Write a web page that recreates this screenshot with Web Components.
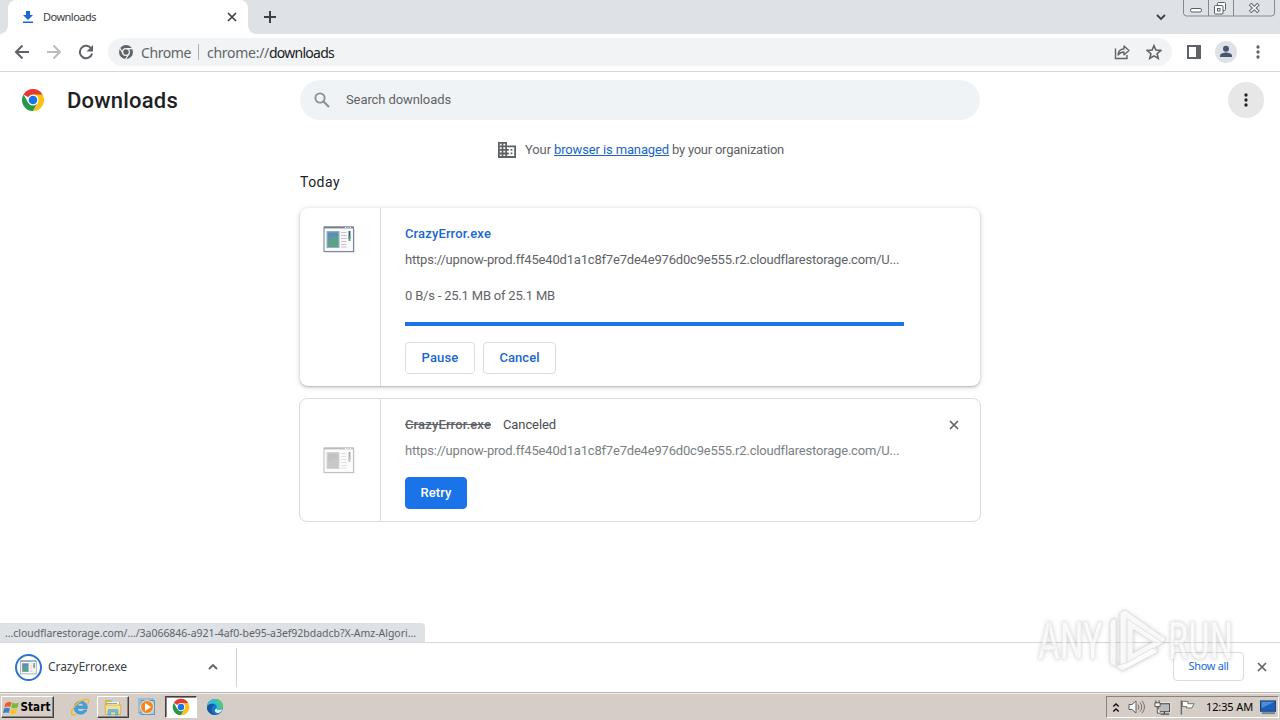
<!DOCTYPE html>
<html lang="en">
<head>
<meta charset="utf-8">
<title>Downloads</title>
<style>
html, body {
    margin: 0;
    height: 100%;
    overflow: hidden;
    background: #fff;
}
</style>
</head>
<body>
<desktop-screen></desktop-screen>

<script>
const define = (name, html, setup) => {
    const template = document.createElement('template');
    template.innerHTML = html;

    window.customElements.define(name, class extends HTMLElement {
        constructor() {
            super();
            this._shadowRoot = this.attachShadow({ mode: 'open' });
            this._shadowRoot.appendChild(template.content.cloneNode(true));
        }

        connectedCallback() {
            if (setup) setup(this, this._shadowRoot);
        }
    });
};

// Single line of text, tracked so that it fills the given width
define('fit-text', `
<style>
:host { display: inline-block; white-space: nowrap; flex: none; padding-bottom: var(--lift, 2px); }
</style>
<span><slot></slot></span>
`, (host, root) => {
    const span = root.querySelector('span');
    const count = host.textContent.length;
    span.style.letterSpacing = '0';
    const natural = span.getBoundingClientRect().width;
    if (natural) {
        span.style.letterSpacing = (host.getAttribute('w') - natural) / count + 'px';
    }
});

const icons = {
    download: ['0 0 12 14', '<path d="M4 1h4v4h3L6 10 1 5h3zM1 11.6h10V13H1z" fill="#1967d2"/>'],
    close: ['0 0 10 10', '<path d="M1 1l8 8M9 1L1 9" stroke="currentColor" stroke-width="1.7"/>'],
    plus: ['0 0 12 12', '<path d="M6 0v12M0 6h12" stroke="#3c4043" stroke-width="2"/>'],
    chevron: ['0 0 10 10', '<path d="M1 3l4 4 4-4" fill="none" stroke="currentColor" stroke-width="1.8"/>'],
    up: ['0 0 10 10', '<path d="M1 7l4-4 4 4" fill="none" stroke="currentColor" stroke-width="1.8"/>'],
    back: ['0 0 16 16', '<path d="M15 8H2M8.5 1.5L2 8l6.500 6.500" fill="none" stroke="#5f6368" stroke-width="2"/>'],
    forward: ['0 0 16 16', '<path d="M1 8h13M7.500 1.500L14 8l-6.500 6.500" fill="none" stroke="#babcbe" stroke-width="2"/>'],
    reload: ['0 0 16 16', '<path d="M13.300 4.700A6.200 6.200 0 1 0 14.100 9.500" fill="none" stroke="#5f6368" stroke-width="2"/><path d="M15 1v6.500H8.500z" fill="#5f6368"/>'],
    mono: ['0 0 16 16', '<circle cx="8" cy="8" r="7" fill="#5f6368"/><circle cx="8" cy="8" r="3.400" fill="#5f6368" stroke="#f1f3f4" stroke-width="1.300"/><path d="M8 4.600h6.500M5.100 9.700L1.700 4M10.900 9.700L7.600 15.200" stroke="#f1f3f4" stroke-width="1.200"/>'],
    chrome: ['0 0 24 24', '<path d="M12 12L2.470 6.500A11 11 0 0 1 21.530 6.500z" fill="#e33b2e"/><path d="M7.200 14.700L2.470 6.500A11 11 0 0 0 12 23l4.800-8.300z" fill="#279847"/><path d="M16.800 14.700L12 23a11 11 0 0 0 9.530-16.500H12z" fill="#fbc116"/><circle cx="12" cy="12" r="5.500" fill="#fff"/><circle cx="12" cy="12" r="4.300" fill="#1a73e8"/>'],
    share: ['0 0 16 16', '<path d="M1.500 4.500v10h11.500v-3.500" fill="none" stroke="#5f6368" stroke-width="1.400"/><path d="M4 11c.3-4 2.500-6 6-6V2l5 4.500-5 4.400V8C7.500 8 5.500 9 4 11z" fill="none" stroke="#5f6368" stroke-width="1.300" stroke-linejoin="round"/>'],
    star: ['0 0 16 16', '<path d="M8 1.700l1.900 4.400 4.800.4-3.600 3.200 1.100 4.700L8 11.900l-4.200 2.500 1.100-4.700L1.300 6.500l4.800-.4z" fill="none" stroke="#5f6368" stroke-width="1.600"/>'],
    panel: ['0 0 14 14', '<path d="M0 0h14v14H0zM2 2v10h7V2z" fill="#5f6368" fill-rule="evenodd"/>'],
    avatar: ['0 0 22 22', '<circle cx="11" cy="11" r="11" fill="#dee1e6"/><circle cx="11" cy="7.800" r="3" fill="#4a5673"/><path d="M5 16v-1.500c0-2 4-3 6-3s6 1 6 3V16z" fill="#4a5673"/>'],
    dots: ['0 0 4 16', '<circle cx="2" cy="3" r="1.650"/><circle cx="2" cy="8" r="1.650"/><circle cx="2" cy="13" r="1.650"/>'],
    search: ['0 0 16 16', '<circle cx="6" cy="6" r="4.600" fill="none" stroke="#8b8f93" stroke-width="1.900"/><path d="M9.300 9.300l5.700 5.700" stroke="#8b8f93" stroke-width="2.100"/>'],
    building: ['0 0 18 16', '<path d="M0 0h9v3.500h9V16H0zM1.800 1.800v1.600h1.800V1.800zm3.600 0v1.600h1.800V1.800zM1.800 5.200v1.700h1.800V5.200zm3.600 0v1.700h1.800V5.200zM1.800 8.800v1.700h1.800V8.800zm3.600 0v1.700h1.800V8.800zM1.800 12.400V14h1.800v-1.600zm3.600 0V14h1.800v-1.600zM9 5.200v1.700h1.800v1.900H9v1.700h1.800v1.900H9V14h7.200V5.200z" fill="#5f6368" fill-rule="evenodd"/><path d="M12.600 7h1.800v1.700h-1.800zM12.600 10.500h1.800v1.700h-1.800z" fill="#5f6368"/>'],
    exe: ['0 0 32 27', '<path d="M2 26.200h29.300V3" fill="none" stroke="#000" stroke-opacity=".13"/><rect x="1" y="1" width="29.500" height="24.500" fill="#fafbfd" stroke="#7d889a" stroke-width="1.100"/><path d="M1 1.500h29.500" stroke="#747e92" stroke-width="1.800"/><path d="M22 1.500h7" stroke="#fff" stroke-dasharray="1 1.500"/><rect x="4" y="5.500" width="12" height="16" fill="#659fac" stroke="#9dacbf"/><path d="M5 15l5-3 5-4v13H5z" fill="#5aa388"/><path d="M5 7h10v3l-6 2-4 3z" fill="#5b8fb5"/><path d="M18 6.500h5.500M18 9.500h5.500M18 12.500h5.500M18 15.500h5.500M18 18.500h5.500M18 21h5.500" stroke="#d3bcc1"/><path d="M26.500 5v8" stroke="#2e5a7c" stroke-width="1.800"/><path d="M26.500 10v5" stroke="#4aa06c" stroke-width="1.800"/>'],
    winflag: ['0 0 20 18', '<path d="M3 4q4-3 7-1L8.500 8.500Q5 7 1.500 9z" fill="#ec5c2c"/><path d="M11 3.200q4 2 7.500 0L17 9q-4 2-7.300 0z" fill="#78b83c"/><path d="M1.200 10.200q3.500-2 7 0L6.700 15.500Q3.500 14 0 15.700z" fill="#3d80ce"/><path d="M9.400 10.400q4 1.600 7.300 0L15.200 16q-4 1.700-7.300-.2z" fill="#f9c22e"/>'],
    ie: ['0 0 20 20', '<path d="M17.300 11.500H7.400c.2 3.600 4.900 4 6.200 1.500h3.300c-2.200 6.300-12.700 5.300-12.700-2.300 0-8.500 13.600-9 13.100.8zM7.500 9h6.200C13.400 5.300 8 5.300 7.500 9z" fill="#3da3de" stroke="#2a88cc" stroke-width=".6"/><path d="M2 17.500C-.5 14 8 3 16.500 2.300c3-.2 2 3.200.8 5" fill="none" stroke="#edb83c" stroke-width="1.500"/><path d="M2 17.500c1 1.200 3.500 0 5-.8" fill="none" stroke="#edb83c" stroke-width="1.400"/>'],
    folder: ['0 0 18 18', '<path d="M1 2h6l1.500 2H16v12H1z" fill="#d9b54e"/><path d="M3 4h12v5H3z" fill="#f7f3da"/><path d="M3 5.500h10" stroke="#6ab0e0"/><path d="M1 7h16l-.5 9.500h-15z" fill="#f5df91" stroke="#cda743" stroke-width=".7"/><path d="M4 17v-4.500q0-1 1-1h8q1 0 1 1V17h-2.500v-3h-5v3z" fill="#72bfe5" stroke="#4192c2" stroke-width=".5"/>'],
    media: ['0 0 18 18', '<rect x="1" y="1" width="14" height="14" fill="#b8dcf3" stroke="#6fa5cb"/><rect x="3" y="2.500" width="13.500" height="14" fill="#9fcdea" stroke="#6299c2"/><circle cx="9" cy="9" r="6.500" fill="#f28822" stroke="#fff3de" stroke-width=".8"/><path d="M7 5L13 9 7 13z" fill="#fff"/>'],
    edge: ['0 0 18 18', '<circle cx="9" cy="9" r="8" fill="#1979c3"/><path d="M1 9C1-1 16-2 17 7.500c.2 3-2 4.500-4.500 4.500-2.500 0-2.500-1-2-2 .7-1.500 0-3.500-2-4C6 5.300 3 6 1 9z" fill="#38bed0"/><path d="M8 1.200c5-.5 8.700 2.500 9 6.300.1 2-1 3.600-3 4.300.5-4-1-8.500-6-10.600z" fill="#55c96b"/><path d="M7 8c-3 3-1 8 3.500 8.800C5 18 0 13 1.100 8.500 3 5.500 6 5.500 8 6.200 8 7 7.500 7.500 7 8z" fill="#1458a4"/><path d="M10.500 10.500c-.5 1.500 3 2.200 6 .5-.8 2-2 3.300-3.500 4-3.500.5-6-3-2.500-4.500z" fill="#e1f2f8"/>'],
    more: ['0 0 8 11', '<path d="M1.300 4.500L4 2l2.700 2.500M1.300 9.500L4 7l2.700 2.500" fill="none" stroke="#111" stroke-width="1.500"/>'],
    speaker: ['0 0 18 16', '<path d="M1 5.500h3L8 2v12l-4-3.500H1z" fill="#f8f8f8" stroke="#5f5f5f"/><path d="M10 5.500q2 2.500 0 5M12 3.500q3.500 4.500 0 9M14 1.800q5 6.200 0 12.400" fill="none" stroke="#707070"/>'],
    network: ['0 0 18 17', '<rect x="4.500" y="4.500" width="12" height="8.500" fill="#b9bcbe" stroke="#fff" stroke-width="2.500"/><rect x="4.500" y="4.500" width="12" height="8.500" fill="#b9bcbe" stroke="#505050" stroke-width="1.200"/><path d="M7 15.500h9M11 13v2" stroke="#505050" stroke-width="1.400"/><path d="M2 1v3M5.500 1v3M1 3.500h5.500v4H1zM3.500 8v6.500H7" fill="#f8f8f8" stroke="#505050"/>'],
    flag: ['0 0 18 17', '<path d="M2.500 1v15" stroke="#686868" stroke-width="1.500"/><path d="M3.500 2h6v2.500h6.500L13.500 9H8V7.500H3.500z" fill="#fff" stroke="#686868"/>'],
    monitor: ['0 0 17 15', '<rect x=".5" y=".5" width="16" height="11" fill="#1e5fb9" stroke="#1b3d6e"/><path d="M1.500 1.500h14L2 8z" fill="#4b8eda"/><path d="M2 13.500h14" stroke="#6c8296" stroke-width="2"/>'],
};

define('ui-icon', `
<style>
:host { display: inline-flex; flex: none; fill: currentColor; }
svg { display: block; }
</style>
<svg></svg>
`, (host, root) => {
    const svg = root.querySelector('svg');
    const [viewBox, body] = icons[host.getAttribute('name')];
    svg.setAttribute('viewBox', viewBox);
    svg.setAttribute('width', host.getAttribute('w'));
    svg.setAttribute('height', host.getAttribute('h') || host.getAttribute('w'));
    svg.innerHTML = body;
});

define('tab-strip', `
<style>
:host {
    display: flex;
    align-items: flex-start;
    height: 34px;
    background: #dee1e6;
    position: relative;
    color: #3c4043;
}
.tab {
    box-sizing: border-box;
    width: 240px;
    height: 34px;
    margin-left: 8px;
    padding: 0 11px 0 14px;
    display: flex;
    align-items: center;
    background: #fff;
    border-radius: 8px 8px 0 0;
    font-size: 11px;
    position: relative;
}
.tab::before, .tab::after {
    content: "";
    position: absolute;
    bottom: 0;
    width: 8px;
    height: 8px;
}
.tab::before { left: -8px; background: radial-gradient(circle at 0 0, transparent 7.500px, #fff 8px); }
.tab::after { right: -8px; background: radial-gradient(circle at 100% 0, transparent 7.500px, #fff 8px); }
.tab fit-text { margin-left: 9px; }
.tab .x { margin-left: auto; color: #3c4043; }
.new { margin: 11px 0 0 16px; }
.down { margin: 12px 17px 0 auto; }
.win {
    width: 92px;
    height: 17px;
    margin-right: 5px;
}
</style>
<div class="tab">
    <ui-icon name="download" w="12" h="14"></ui-icon>
    <fit-text w="53">Downloads</fit-text>
    <ui-icon class="x" name="close" w="10"></ui-icon>
</div>
<ui-icon class="new" name="plus" w="12"></ui-icon>
<ui-icon class="down" name="chevron" w="10"></ui-icon>
<svg class="win" viewBox="0 0 92 17" fill="none" stroke="#85898f">
    <path d="M.5-4v17q0 3 3 3h85q3 0 3-3V-4M25.500 0v16M50.500 0v16"/>
    <rect x="7.500" y="8.500" width="11" height="3.500" rx="1.500" fill="#fff" stroke="#5b5f68"/>
    <g stroke="#5b5f68" fill="#fff"><rect x="34.500" y="2.500" width="8" height="8" rx="1"/><rect x="31.500" y="5.500" width="8.500" height="8.500" rx="1"/><rect x="34.500" y="8.500" width="2.500" height="2.500"/></g>
    <path d="M67 4l8.500 8M75.500 4L67 12" stroke="#5b5f68" stroke-width="3.600"/>
    <path d="M67.500 4.500l7.500 7M75 4.500l-7.500 7" stroke="#fff" stroke-width="1.700"/>
</svg>
`);

define('tool-bar', `
<style>
:host {
    box-sizing: border-box;
    height: 38px;
    padding: 4px 14px 5px;
    display: flex;
    align-items: center;
    border-bottom: 1px solid #d5d7da;
    color: #5f6368;
    background: #fff;
    --lift: 0;
}
.nav { display: flex; gap: 16px; margin-right: 14px; }
.omnibox {
    box-sizing: border-box;
    height: 28px;
    flex: 1;
    display: flex;
    align-items: center;
    padding: 0 10px;
    border-radius: 14px;
    background: #f1f3f4;
    font-size: 14px;
}
.name { margin-left: 7px; }
.bar { width: 1px; height: 16px; margin: 0 8px 0 7px; background: #a9acb0; }
.path { color: #202124; }
.share { margin-left: auto; }
.star { margin-left: 16px; }
.panel { margin-left: 15px; }
.avatar { margin-left: 14px; }
.menu { margin: 0 6px 0 19px; }
</style>
<div class="nav">
    <ui-icon name="back" w="16"></ui-icon>
    <ui-icon name="forward" w="16"></ui-icon>
    <ui-icon name="reload" w="16"></ui-icon>
</div>
<div class="omnibox">
    <ui-icon name="mono" w="16"></ui-icon>
    <fit-text class="name" w="50">Chrome</fit-text>
    <span class="bar"></span>
    <fit-text w="62">chrome://</fit-text><fit-text class="path" w="65">downloads</fit-text>
    <ui-icon class="share" name="share" w="16"></ui-icon>
    <ui-icon class="star" name="star" w="16"></ui-icon>
</div>
<ui-icon class="panel" name="panel" w="14"></ui-icon>
<ui-icon class="avatar" name="avatar" w="22"></ui-icon>
<ui-icon class="menu" name="dots" w="4" h="16"></ui-icon>
`);

define('page-header', `
<style>
:host {
    height: 56px;
    display: flex;
    align-items: center;
    padding: 0 16px 0 21px;
    color: #202124;
}
h1 {
    --lift: 0;
    margin: 2px 0 0 22px;
    font-size: 22px;
    font-weight: 500;
    line-height: 28px;
    width: 233px;
}
.search {
    box-sizing: border-box;
    width: 680px;
    height: 40px;
    padding-left: 14px;
    display: flex;
    align-items: center;
    gap: 16px;
    border-radius: 20px;
    background: #f0f3f5;
    color: #5f6368;
    font-size: 13px;
}
.menu {
    width: 36px;
    height: 36px;
    margin-left: auto;
    display: flex;
    align-items: center;
    justify-content: center;
    border-radius: 50%;
    background: #e7e7e7;
}
</style>
<ui-icon name="chrome" w="24"></ui-icon>
<h1><fit-text w="111">Downloads</fit-text></h1>
<div class="search">
    <ui-icon name="search" w="16"></ui-icon>
    <fit-text w="105">Search downloads</fit-text>
</div>
<div class="menu"><ui-icon name="dots" w="4" h="16"></ui-icon></div>
`);

define('managed-note', `
<style>
:host {
    display: flex;
    align-items: center;
    justify-content: center;
    height: 44px;
    padding-left: 2px;
    font-size: 13px;
    color: #5f6368;
}
ui-icon { margin-right: 9px; }
.link { color: #1a65c9; text-decoration: underline; margin: 0 3px; }
</style>
<ui-icon name="building" w="18" h="16"></ui-icon>
<fit-text w="26">Your</fit-text>
<fit-text class="link" w="115">browser is managed</fit-text>
<fit-text w="112">by your organization</fit-text>
`);

define('action-button', `
<style>
:host {
    box-sizing: border-box;
    display: inline-flex;
    align-items: center;
    justify-content: center;
    height: 32px;
    border: 1px solid #dadce0;
    border-radius: 4px;
    color: #1967d2;
    background: #fff;
    font-size: 13px;
    font-weight: 500;
}
:host([primary]) {
    border-color: #1a73e8;
    background: #1a73e8;
    color: #fff;
}
</style>
<slot></slot>
`);

define('download-card', `
<style>
:host {
    box-sizing: border-box;
    width: 682px;
    height: 124px;
    display: flex;
    border: 1px solid #dadce0;
    border-radius: 8px;
    background: #fff;
    color: #5f6368;
    font-size: 13px;
}
:host([active]) {
    width: 680px;
    height: 178px;
    margin: 1px 1px 0;
    border: 0;
    box-shadow: 0 1px 2px rgba(60, 64, 67, .3), 0 1px 5px 1px rgba(60, 64, 67, .15);
}
.side {
    box-sizing: border-box;
    width: 81px;
    display: flex;
    align-items: center;
    justify-content: center;
    border-right: 1px solid #dadce0;
    padding-right: 2px;
}
:host([active]) .side { align-items: flex-start; padding-top: 18px; }
:host(:not([active])) .side ui-icon { filter: grayscale(1); opacity: .5; }
.content { width: 499px; padding: 13px 0 0 24px; }
.x { margin: 21px 0 0 45px; color: #5f6368; }
:host([active]) .x { display: none; }
</style>
<div class="side"><ui-icon name="exe" w="32" h="27"></ui-icon></div>
<div class="content"><slot></slot></div>
<ui-icon class="x" name="close" w="10"></ui-icon>
`);

define('download-list', `
<style>
:host { display: flow-root; width: 682px; margin-left: 299px; }
h2 {
    margin: 0;
    height: 35px;
    padding-left: 1px;
    box-sizing: border-box;
    display: flex;
    align-items: flex-start;
    font-size: 14px;
    line-height: 20px;
    font-weight: 400;
    color: #202124;
}
download-card + download-card { margin-top: 12px; }
.row { display: flex; align-items: center; height: 26px; }
.name { color: #1967d2; font-weight: 500; }
.gone { color: #5f6368; font-weight: 500; text-decoration: line-through; margin-right: 12px; }
.state { color: #494c50; }
.old { color: #7b7f83; }
.status { margin-top: 10px; }
.progress { height: 4px; margin-top: 13px; background: #1a73e8; }
.buttons { margin-top: 16px; display: flex; gap: 8px; }
.retry { margin-top: 13px; display: flex; }
</style>
<h2><fit-text w="40">Today</fit-text></h2>
<download-card active>
    <div class="row name"><fit-text w="86">CrazyError.exe</fit-text></div>
    <div class="row"><fit-text w="494">https://upnow-prod.ff45e40d1a1c8f7e7de4e976d0c9e555.r2.cloudflarestorage.com/U...</fit-text></div>
    <div class="row status"><fit-text w="150">0 B/s - 25.1 MB of 25.1 MB</fit-text></div>
    <div class="progress"></div>
    <div class="buttons">
        <action-button style="width: 70px"><fit-text w="37">Pause</fit-text></action-button>
        <action-button style="width: 73px"><fit-text w="40">Cancel</fit-text></action-button>
    </div>
</download-card>
<download-card>
    <div class="row">
        <fit-text class="gone" w="86">CrazyError.exe</fit-text>
        <fit-text class="state" w="53">Canceled</fit-text>
    </div>
    <div class="row old"><fit-text w="494">https://upnow-prod.ff45e40d1a1c8f7e7de4e976d0c9e555.r2.cloudflarestorage.com/U...</fit-text></div>
    <div class="retry"><action-button primary style="width: 62px"><fit-text w="31">Retry</fit-text></action-button></div>
</download-card>
`);

define('download-shelf', `
<style>
:host {
    box-sizing: border-box;
    height: 50px;
    display: flex;
    align-items: center;
    border-top: 1px solid #d5d7da;
    padding: 0 13px 0 15px;
    color: #3c4043;
    background: #fff;
    font-size: 12px;
}
.ring {
    box-sizing: border-box;
    width: 27px;
    height: 27px;
    display: flex;
    align-items: center;
    justify-content: center;
    border: 2px solid #2b72cf;
    border-radius: 50%;
    margin-right: 6px;
}
.up { margin: -2px 0 0 81px; color: #5f6368; }
.bar { width: 1px; height: 39px; margin-left: 18px; background: #d0d2d5; }
.all {
    box-sizing: border-box;
    width: 71px;
    height: 29px;
    margin: -2px 0 0 auto;
    display: flex;
    align-items: center;
    justify-content: center;
    border: 1px solid #dadce0;
    border-radius: 4px;
    color: #1967d2;
    font-size: 11px;
}
.x { margin: -1px 0 0 13px; color: #5f6368; }
</style>
<div class="ring"><ui-icon name="exe" w="17" h="15"></ui-icon></div>
<fit-text w="79">CrazyError.exe</fit-text>
<ui-icon class="up" name="up" w="10"></ui-icon>
<span class="bar"></span>
<div class="all"><fit-text w="40">Show all</fit-text></div>
<ui-icon class="x" name="close" w="10"></ui-icon>
`);

define('task-bar', `
<style>
:host {
    box-sizing: border-box;
    height: 28px;
    display: flex;
    align-items: center;
    padding: 1px 0 0 1px;
    border-top: 1px solid #b8b8b4;
    box-shadow: inset 0 1px #f3f0ea;
    background: #d6cec6;
    color: #000;
    font-size: 11px;
    --lift: 0;
}
.button {
    box-sizing: border-box;
    height: 22px;
    display: flex;
    align-items: center;
    justify-content: center;
    border: 1px solid;
    border-color: #fff #404040 #404040 #fff;
    box-shadow: inset -1px -1px #8c867e;
}
.start {
    width: 53px;
    padding-right: 2px;
    font: bold 11.500px "DejaVu Sans Condensed", "DejaVu Sans", sans-serif;
    gap: 1px;
}
.ie { margin: 0 7px 0 16px; }
.folder { width: 32px; }
.media { margin: 0 9px 0 9px; }
.chrome {
    width: 32px;
    background: #fff;
    border-color: #404040 #fff #fff #404040;
    box-shadow: inset 1px 1px #8c867e;
}
.edge { margin-left: 9px; }
.tray {
    box-sizing: border-box;
    width: 173px;
    height: 22px;
    margin: 0 1px 0 auto;
    padding: 0 1px 0 5px;
    display: flex;
    align-items: center;
    border: 1px solid;
    border-color: #89847d #fff #fff #89847d;
}
.tray ui-icon + ui-icon { margin-left: 8px; }
.tray .clock { margin: 0 7px 0 10px; --lift: 2px; }
</style>
<div class="button start"><ui-icon name="winflag" w="17" h="17"></ui-icon><fit-text w="30">Start</fit-text></div>
<ui-icon class="ie" name="ie" w="20"></ui-icon>
<div class="button folder"><ui-icon name="folder" w="18"></ui-icon></div>
<ui-icon class="media" name="media" w="18"></ui-icon>
<div class="button chrome"><ui-icon name="chrome" w="18"></ui-icon></div>
<ui-icon class="edge" name="edge" w="18"></ui-icon>
<div class="tray">
    <ui-icon name="more" w="8" h="11"></ui-icon>
    <ui-icon name="speaker" w="18" h="16"></ui-icon>
    <ui-icon name="network" w="17" h="17"></ui-icon>
    <ui-icon name="flag" w="17" h="17"></ui-icon>
    <fit-text class="clock" w="47">12:35 AM</fit-text>
    <ui-icon name="monitor" w="16" h="15"></ui-icon>
</div>
`);

define('status-bubble', `
<style>
:host {
    box-sizing: border-box;
    width: 425px;
    height: 19px;
    padding-left: 5px;
    display: flex;
    align-items: center;
    border-radius: 0 4px 0 0;
    background: #dee1e6;
    color: #5f6368;
    font-size: 10.500px;
    --lift: 0;
}
</style>
<fit-text w="411">...cloudflarestorage.com/.../3a066846-a921-4af0-be95-a3ef92bdadcb?X-Amz-Algori...</fit-text>
`);

define('water-mark', `
<style>
:host { display: block; pointer-events: none; filter: drop-shadow(0 0 2px rgba(0, 0, 0, .28)); opacity: .72; }
svg { display: block; }
text { font: 500 51px Roboto, sans-serif; fill: #fff; fill-opacity: .8; stroke: #dcdcdc; stroke-width: .7; }
path { fill: #fff; fill-opacity: .8; stroke: #d6d6d6; stroke-width: 1; stroke-linejoin: round; fill-rule: evenodd; }
</style>
<svg width="210" height="76" viewBox="0 0 210 76">
    <text x="8" y="55" textLength="65" lengthAdjust="spacingAndGlyphs">ANY</text>
    <path d="M80 17l6-3v49l-6-4z"/>
    <path d="M90 9l5-3 41 29-5 5-34-23v41l27-15 5 4-34 18-5-4z"/>
    <path d="M97 15l36 24-36 21zM103 25v24l20-11z"/>
    <path d="M86 62l6 5 36-19-5-4-27 15z"/>
    <text x="138" y="55" textLength="65" lengthAdjust="spacingAndGlyphs">RUN</text>
</svg>
`);

define('desktop-screen', `
<style>
:host {
    display: flex;
    flex-direction: column;
    width: 1280px;
    height: 720px;
    position: relative;
    overflow: hidden;
    background: #fff;
    font-family: "Noto Sans", "Open Sans", sans-serif;
}
tab-strip, tool-bar, download-shelf, task-bar { flex: none; }
main { flex: 1; min-height: 0; font-family: Roboto, sans-serif; }
status-bubble { position: absolute; left: 0; top: 623px; }
water-mark { position: absolute; left: 1030px; top: 604px; }
</style>
<tab-strip></tab-strip>
<tool-bar></tool-bar>
<main>
    <page-header></page-header>
    <managed-note></managed-note>
    <download-list></download-list>
</main>
<download-shelf></download-shelf>
<task-bar></task-bar>
<status-bubble></status-bubble>
<water-mark></water-mark>
`);
</script>
</body>
</html>
